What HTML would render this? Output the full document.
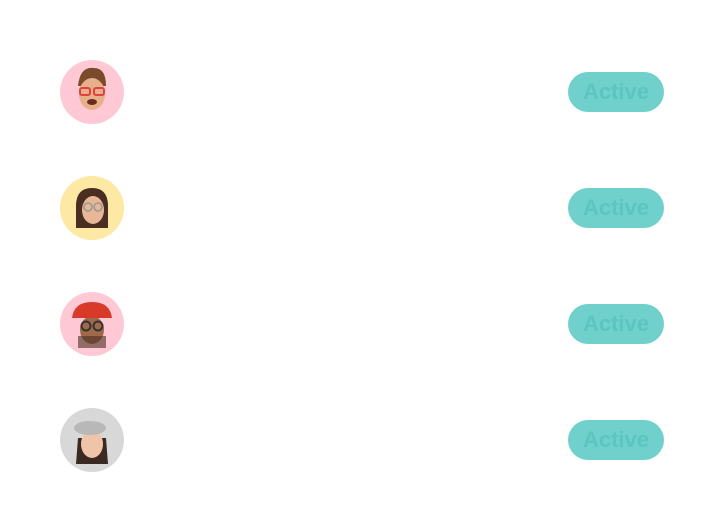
<!DOCTYPE html>
<html><head><style>
body{margin:0;width:728px;height:532px;background:#fff;position:relative;font-family:"Liberation Sans",sans-serif;overflow:hidden}
.av{position:absolute;left:60px;width:64px;height:64px;border-radius:50%;overflow:hidden}
.pill{position:absolute;left:568px;width:96px;height:40px;border-radius:20px;background:#6fd0cc;color:#5cc5c1;font-weight:bold;font-size:22px;line-height:40px;text-align:center}
</style></head><body>
<div class="av" style="top:60px;background:#ffc8d5"><svg width="64" height="64"><path d="M18 26 Q20 6 34 8 Q46 8 46 26 Z" fill="#7a4a2a"/><ellipse cx="32" cy="34" rx="13" ry="16" fill="#e8b08a"/><path d="M19 24 Q24 10 34 12 Q44 14 45 24 Q40 16 32 18 Q24 18 19 24Z" fill="#7a4a2a"/><rect x="20" y="28" width="10" height="7" rx="2" fill="none" stroke="#e04040" stroke-width="2"/><rect x="34" y="28" width="10" height="7" rx="2" fill="none" stroke="#e04040" stroke-width="2"/><ellipse cx="32" cy="42" rx="5" ry="3" fill="#6a2a20"/></svg></div>
<div class="av" style="top:176px;background:#fde8a4"><svg width="64" height="64"><path d="M16 30 Q16 12 32 12 Q48 12 48 30 L48 52 L16 52Z" fill="#4a2e22"/><ellipse cx="33" cy="34" rx="11" ry="14" fill="#e8b896"/><circle cx="28" cy="31" r="4" fill="none" stroke="#999" stroke-width="1.5"/><circle cx="38" cy="31" r="4" fill="none" stroke="#999" stroke-width="1.5"/></svg></div>
<div class="av" style="top:292px;background:#ffc8d5"><svg width="64" height="64"><ellipse cx="32" cy="38" rx="12" ry="14" fill="#a06a4a"/><path d="M12 26 Q14 10 32 10 Q50 10 52 26 Z" fill="#d83a2a"/><circle cx="26" cy="34" r="4.5" fill="none" stroke="#333" stroke-width="2"/><circle cx="38" cy="34" r="4.5" fill="none" stroke="#333" stroke-width="2"/><path d="M18 44 L18 56 L46 56 L46 44 Z" fill="#4a2e22" opacity=".6"/></svg></div>
<div class="av" style="top:408px;background:#d8d8d8"><svg width="64" height="64"><path d="M18 30 L16 56 L48 56 L46 30Z" fill="#3a2a22"/><ellipse cx="32" cy="36" rx="11" ry="14" fill="#f0c4a8"/><ellipse cx="30" cy="20" rx="16" ry="7" fill="#b8b8b8"/></svg></div>
<div class="pill" style="top:72px">Active</div>
<div class="pill" style="top:188px">Active</div>
<div class="pill" style="top:304px">Active</div>
<div class="pill" style="top:420px">Active</div>
</body></html>
